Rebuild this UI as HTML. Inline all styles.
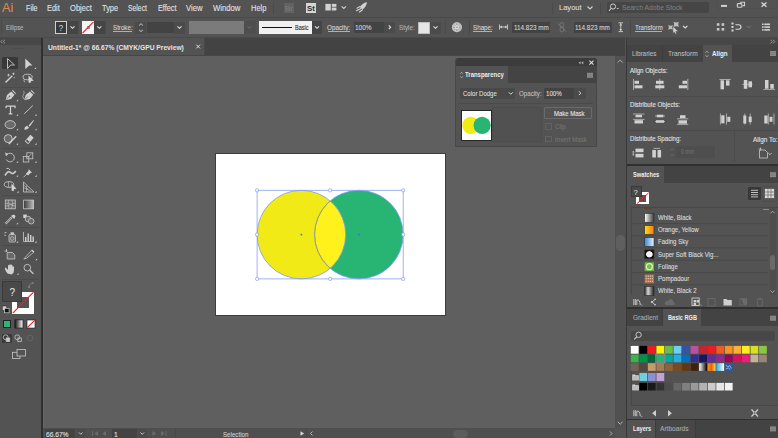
<!DOCTYPE html>
<html><head><meta charset="utf-8">
<style>
*{margin:0;padding:0;box-sizing:border-box}
html,body{width:778px;height:438px;overflow:hidden;background:#535353;font-family:"Liberation Sans",sans-serif;color:#d6d6d6}
.a{position:absolute}
.t{position:absolute;white-space:nowrap;-webkit-text-stroke-width:0.1px}
svg{position:absolute;left:0;top:0;overflow:visible}
</style></head><body>
<div class="a" style="left:0px;top:0px;width:778px;height:438px;background:#535353;"></div>
<div class="a" style="left:0px;top:17px;width:778px;height:1px;background:#4a4a4a;"></div>
<div class="a" style="left:0px;top:37px;width:778px;height:1px;background:#4a4a4a;"></div>
<div class="a" style="left:0px;top:38px;width:41px;height:7px;background:#474747;"></div>
<div class="a" style="left:41px;top:38px;width:2px;height:400px;background:#303030;"></div>
<div class="a" style="left:43px;top:38px;width:582px;height:18px;background:#434343;"></div>
<div class="a" style="left:43px;top:38px;width:161px;height:17px;background:#535353;"></div>
<div class="a" style="left:204px;top:38px;width:1px;height:17px;background:#484848;"></div>
<div class="a" style="left:43px;top:55px;width:572px;height:1px;background:#464646;"></div>
<div class="a" style="left:43px;top:56px;width:572px;height:373px;background:#5f5f5f;"></div>
<div class="a" style="left:43px;top:56px;width:1px;height:373px;background:#666;"></div>
<div class="a" style="left:615px;top:56px;width:10.5px;height:373px;background:#515151;"></div>
<div class="a" style="left:43px;top:428px;width:572px;height:10px;background:#4f4f4f;"></div>
<div class="a" style="left:625.5px;top:38px;width:1.7px;height:400px;background:#383838;"></div>
<div class="a" style="left:627px;top:38px;width:151px;height:7px;background:#474747;"></div>
<div class="a" style="left:627px;top:45px;width:151px;height:17px;background:#434343;"></div>
<div class="a" style="left:627px;top:62px;width:151px;height:102px;background:#535353;"></div>
<div class="a" style="left:627px;top:164px;width:151px;height:2px;background:#303030;"></div>
<div class="a" style="left:627px;top:166px;width:151px;height:17px;background:#434343;"></div>
<div class="a" style="left:627px;top:183px;width:151px;height:124px;background:#535353;"></div>
<div class="a" style="left:627px;top:307px;width:151px;height:2px;background:#303030;"></div>
<div class="a" style="left:627px;top:309px;width:151px;height:17px;background:#434343;"></div>
<div class="a" style="left:627px;top:326px;width:151px;height:93px;background:#535353;"></div>
<div class="a" style="left:627px;top:419px;width:151px;height:1px;background:#303030;"></div>
<div class="a" style="left:627px;top:420px;width:151px;height:18px;background:#434343;"></div>
<div class="t" style="left:2.0px;top:2.00px;font-size:12.6px;line-height:12.6px;color:#d98a4e;transform:scaleX(1.000);transform-origin:0 0;">Ai</div>
<div class="t" style="left:25.5px;top:4.00px;font-size:8.4px;line-height:8.4px;color:#e2e2e2;transform:scaleX(0.857);transform-origin:0 0;">File</div>
<div class="t" style="left:47.3px;top:4.00px;font-size:8.4px;line-height:8.4px;color:#e2e2e2;transform:scaleX(0.884);transform-origin:0 0;">Edit</div>
<div class="t" style="left:69.6px;top:4.00px;font-size:8.4px;line-height:8.4px;color:#e2e2e2;transform:scaleX(0.902);transform-origin:0 0;">Object</div>
<div class="t" style="left:101.8px;top:4.00px;font-size:8.4px;line-height:8.4px;color:#e2e2e2;transform:scaleX(0.890);transform-origin:0 0;">Type</div>
<div class="t" style="left:128.2px;top:4.00px;font-size:8.4px;line-height:8.4px;color:#e2e2e2;transform:scaleX(0.814);transform-origin:0 0;">Select</div>
<div class="t" style="left:157.8px;top:4.00px;font-size:8.4px;line-height:8.4px;color:#e2e2e2;transform:scaleX(0.872);transform-origin:0 0;">Effect</div>
<div class="t" style="left:186.2px;top:4.00px;font-size:8.4px;line-height:8.4px;color:#e2e2e2;transform:scaleX(0.914);transform-origin:0 0;">View</div>
<div class="t" style="left:212.8px;top:4.00px;font-size:8.4px;line-height:8.4px;color:#e2e2e2;transform:scaleX(0.920);transform-origin:0 0;">Window</div>
<div class="t" style="left:250.5px;top:4.00px;font-size:8.4px;line-height:8.4px;color:#e2e2e2;transform:scaleX(0.891);transform-origin:0 0;">Help</div>
<div class="a" style="left:273px;top:3px;width:1px;height:11px;background:#4a4a4a;"></div>
<div class="a" style="left:283.7px;top:2.8px;width:10.3px;height:10.1px;background:#626262;"></div>
<div class="t" style="left:285px;top:5.00px;font-size:7px;line-height:7px;color:#7c7c7c;transform:scaleX(1.143);transform-origin:0 0;">Br</div>
<div class="a" style="left:305.6px;top:2.8px;width:10.3px;height:10.1px;background:#d6d6d6;"></div>
<div class="t" style="left:306.9px;top:5.00px;font-size:7px;line-height:7px;color:#2e2e2e;font-weight:bold;-webkit-text-stroke-width:0;transform:scaleX(1.114);transform-origin:0 0;">St</div>
<svg width="778" height="438"><g fill="#d2d2d2"><rect x="325.4" y="3.9" width="5.4" height="6.6"/><rect x="331.8" y="3.9" width="4.6" height="2.9"/><rect x="331.8" y="7.6" width="4.6" height="2.9"/></g><path d="M341.6 6.3 l2.2 2.2 l2.2 -2.2" stroke="#d0d0d0" stroke-width="1.1" fill="none"/><path d="M367 2 Q366.5 6.5 362.5 9.5 L359.8 7 Q362.5 3 367 2 Z" fill="#d0d0d0"/><path d="M360 6.5 L357 8.2 M361 8.5 L356.5 10.7 M362.5 9.8 L359.5 12" stroke="#d0d0d0" stroke-width="1.2" stroke-linecap="round"/></svg>
<div class="a" style="left:551.5px;top:3px;width:1px;height:11px;background:#4a4a4a;"></div>
<div class="t" style="left:558.8px;top:4.00px;font-size:7.8px;line-height:7.8px;color:#dcdcdc;transform:scaleX(0.965);transform-origin:0 0;">Layout</div>
<svg width="778" height="438"><path d="M587.5 6.5 l2.5 2.5 l2.5 -2.5" stroke="#d0d0d0" stroke-width="1.1" fill="none"/></svg>
<div class="a" style="left:599.5px;top:3px;width:1px;height:11px;background:#4a4a4a;"></div>
<div class="a" style="left:607.3px;top:2px;width:102px;height:11px;background:#464646;border-radius:1.5px"></div>
<svg width="778" height="438"><circle cx="613" cy="6.5" r="2.6" stroke="#cfcfcf" stroke-width="1" fill="none"/><path d="M611 8.5 L609 11" stroke="#cfcfcf" stroke-width="1.2"/><path d="M616.5 8 l1.3 1.3 l1.3 -1.3z" fill="#cfcfcf"/></svg>
<div class="t" style="left:622px;top:4.00px;font-size:7.4px;line-height:7.4px;color:#7d7d7d;transform:scaleX(0.902);transform-origin:0 0;">Search Adobe Stock</div>
<div class="a" style="left:716px;top:-2px;width:62px;height:11px;background:transparent;border:0.8px solid #4f4f4f;border-radius:3px"></div>
<svg width="778" height="438"><path d="M721 5.9 H727" stroke="#d0d0d0" stroke-width="2"/><rect x="737.3" y="3.6" width="4.6" height="3.6" rx="0.8" stroke="#d0d0d0" stroke-width="1.1" fill="none"/><path d="M740 2.2 H744.5 V5.6 H742.5" stroke="#d0d0d0" stroke-width="1.1" fill="none"/><path d="M761.5 2.4 L766.5 6.8 M766.5 2.4 L761.5 6.8" stroke="#d8d8d8" stroke-width="1.3"/></svg>
<div class="a" style="left:1px;top:20px;width:1px;height:14px;background:#4a4a4a;"></div>
<div class="t" style="left:6.4px;top:24.00px;font-size:7px;line-height:7px;color:#b4b4b4;transform:scaleX(0.844);transform-origin:0 0;">Ellipse</div>
<div class="a" style="left:54.5px;top:21px;width:24px;height:13px;background:#4b4b4b;border-radius:1px"></div>
<div class="a" style="left:55px;top:21.4px;width:12.2px;height:12.3px;background:#3a3a3a;border:1.4px solid #cfcfcf"></div>
<div class="t" style="left:58.6px;top:24.00px;font-size:8.4px;line-height:8.4px;color:#d8d8d8;-webkit-text-stroke-width:0">?</div>
<div class="a" style="left:67.2px;top:21.4px;width:10.6px;height:12.3px;background:#454545;"></div>
<div class="a" style="left:81.5px;top:21px;width:24px;height:13px;background:#4b4b4b;border-radius:1px"></div>
<div class="a" style="left:82px;top:21.4px;width:12px;height:12.3px;background:#f5f5f5;"></div>
<div class="a" style="left:86.5px;top:26px;width:3px;height:3px;background:#9a9a9a;"></div>
<div class="a" style="left:94px;top:21.4px;width:11.4px;height:12.3px;background:#454545;"></div>
<svg width="778" height="438"><path d="M82.5 33.2 L93.5 21.9" stroke="#e8202a" stroke-width="1.2"/><path d="M70.5 26.3 l2 2 l2 -2" stroke="#dedede" stroke-width="1.15" fill="none"/><path d="M97.3 26.3 l2 2 l2 -2" stroke="#dedede" stroke-width="1.15" fill="none"/></svg>
<div class="t" style="left:112.5px;top:25.00px;font-size:6.8px;line-height:6.8px;color:#d4d4d4;transform:scaleX(0.910);transform-origin:0 0;">Stroke:</div>
<div class="a" style="left:112.5px;top:31.2px;width:19.5px;height:0.6px;background:#b0b0b0;"></div>
<div class="a" style="left:135.3px;top:21.5px;width:11px;height:12px;background:#4b4b4b;"></div>
<div class="a" style="left:147.3px;top:21.7px;width:27px;height:11px;background:#434343;"></div>
<div class="a" style="left:174.3px;top:21.5px;width:10.5px;height:12px;background:#4b4b4b;"></div>
<svg width="778" height="438"><path d="M139 25.5 l2 -1.8 l2 1.8 M139 29.8 l2 1.8 l2 -1.8" stroke="#cfcfcf" stroke-width="0.9" fill="none"/><path d="M177.5 26.3 l2 2 l2 -2" stroke="#dedede" stroke-width="1.15" fill="none"/></svg>
<div class="a" style="left:188.7px;top:20.8px;width:55.2px;height:12.8px;background:#7b7b7b;"></div>
<div class="a" style="left:243.9px;top:20.8px;width:12px;height:12.8px;background:#4e4e4e;"></div>
<svg width="778" height="438"><path d="M247.5 26.3 l2 2 l2 -2" stroke="#6e6e6e" stroke-width="1" fill="none"/></svg>
<div class="a" style="left:258.6px;top:21.4px;width:53.1px;height:12.2px;background:#f0f0f0;"></div>
<div class="a" style="left:261.9px;top:26.6px;width:30.1px;height:1.8px;background:#111;"></div>
<div class="t" style="left:294.8px;top:25.00px;font-size:6.8px;line-height:6.8px;color:#2a2a2a;transform:scaleX(0.818);transform-origin:0 0;">Basic</div>
<div class="a" style="left:311.7px;top:21.4px;width:10.6px;height:12.2px;background:#454545;"></div>
<svg width="778" height="438"><path d="M315 26.3 l2 2 l2 -2" stroke="#dedede" stroke-width="1.15" fill="none"/></svg>
<div class="t" style="left:327.3px;top:25.00px;font-size:6.8px;line-height:6.8px;color:#d4d4d4;transform:scaleX(0.930);transform-origin:0 0;">Opacity:</div>
<div class="a" style="left:327.5px;top:31.2px;width:22.7px;height:0.6px;background:#b0b0b0;"></div>
<div class="a" style="left:354px;top:22px;width:30px;height:10.7px;background:#434343;"></div>
<div class="t" style="left:355.1px;top:25.00px;font-size:6.8px;line-height:6.8px;color:#d4d4d4;transform:scaleX(0.954);transform-origin:0 0;">100%</div>
<div class="a" style="left:384px;top:21.5px;width:11.2px;height:11.5px;background:#4b4b4b;"></div>
<svg width="778" height="438"><path d="M388.8 25.3 l1.8 1.9 l-1.8 1.9" stroke="#dedede" stroke-width="1.15" fill="none"/></svg>
<div class="t" style="left:398.5px;top:25.00px;font-size:6.8px;line-height:6.8px;color:#b0b0b0;transform:scaleX(0.929);transform-origin:0 0;">Style:</div>
<div class="a" style="left:417.7px;top:21.7px;width:12.6px;height:11.9px;background:#e6e6e6;border:0.6px solid #bdbdbd"></div>
<div class="a" style="left:430.3px;top:21.7px;width:10.5px;height:11.9px;background:#4b4b4b;"></div>
<svg width="778" height="438"><path d="M433.5 26.3 l2 2 l2 -2" stroke="#dedede" stroke-width="1.15" fill="none"/></svg>
<div class="a" style="left:445px;top:20px;width:1px;height:15px;background:#4a4a4a;"></div>
<svg width="778" height="438"><circle cx="456.9" cy="27.2" r="5" fill="#d6d6d6"/><circle cx="456.9" cy="27.2" r="4.1" fill="none" stroke="#9a9a9a" stroke-width="0.5"/><g fill="#8a8a8a"><circle cx="456.9" cy="24.3" r="0.8"/><circle cx="456.9" cy="30.1" r="0.8"/><circle cx="454" cy="27.2" r="0.8"/><circle cx="459.8" cy="27.2" r="0.8"/><circle cx="454.9" cy="25.2" r="0.6"/><circle cx="458.9" cy="25.2" r="0.6"/><circle cx="454.9" cy="29.2" r="0.6"/><circle cx="458.9" cy="29.2" r="0.6"/><circle cx="456.9" cy="27.2" r="0.7"/></g></svg>
<div class="a" style="left:468.5px;top:20px;width:1px;height:15px;background:#4a4a4a;"></div>
<div class="t" style="left:472.8px;top:25.00px;font-size:6.8px;line-height:6.8px;color:#d4d4d4;transform:scaleX(0.919);transform-origin:0 0;">Shape:</div>
<div class="a" style="left:473px;top:31.2px;width:19.3px;height:0.6px;background:#b0b0b0;"></div>
<svg width="778" height="438"><path d="M499.5 24.5 V29.5 M507.5 24.5 V29.5 M500 27 H507" stroke="#cfcfcf" stroke-width="0.9"/><path d="M500 27 l2 -1.5 v3z M507 27 l-2 -1.5 v3z" fill="#cfcfcf"/></svg>
<div class="a" style="left:511.8px;top:21.7px;width:38.1px;height:11.3px;background:#434343;"></div>
<div class="t" style="left:513.6px;top:25.00px;font-size:6.6px;line-height:6.6px;color:#d4d4d4;transform:scaleX(0.961);transform-origin:0 0;">114.823 mm</div>
<svg width="778" height="438"><g stroke="#787878" stroke-width="0.9" fill="none"><rect x="560" y="22.6" width="3.8" height="4.6" rx="1.9"/><rect x="560" y="27.2" width="3.8" height="4.8" rx="1.9"/><path d="M557.6 23.2 L566.4 31.8"/></g></svg>
<div class="a" style="left:573.5px;top:21.7px;width:38.7px;height:11.3px;background:#434343;"></div>
<div class="t" style="left:575.3px;top:25.00px;font-size:6.6px;line-height:6.6px;color:#d4d4d4;transform:scaleX(0.961);transform-origin:0 0;">114.823 mm</div>
<svg width="778" height="438"><path d="M618.5 22.8 H623 M618.5 31.6 H623 M620.75 23 V31.4" stroke="#cfcfcf" stroke-width="0.9"/><path d="M620.75 23.5 l-1.5 2 h3z M620.75 30.9 l-1.5 -2 h3z" fill="#cfcfcf"/></svg>
<div class="a" style="left:630px;top:20px;width:1px;height:15px;background:#4a4a4a;"></div>
<div class="t" style="left:634.8px;top:25.00px;font-size:6.8px;line-height:6.8px;color:#d4d4d4;transform:scaleX(0.905);transform-origin:0 0;">Transform</div>
<div class="a" style="left:635px;top:31.2px;width:27.3px;height:0.6px;background:#b0b0b0;"></div>
<svg width="778" height="438"><path d="M668.3000000000001 25.099999999999998 Q670.6 26.365 672.9 25.099999999999998 Q671.635 27.4 672.9 29.7 Q670.6 28.435 668.3000000000001 29.7 Q669.565 27.4 668.3000000000001 25.099999999999998 Z M673.6 21.799999999999997 Q676.2 23.229999999999997 678.8000000000001 21.799999999999997 Q677.37 24.4 678.8000000000001 27.0 Q676.2 25.57 673.6 27.0 Q675.0300000000001 24.4 673.6 21.799999999999997 Z" fill="#bdbdbd"/><path d="M673 26.5 L678 31.2 L675.6 31.4 L676.6 33.4 L675.4 33.9 L674.4 31.9 L673 33.2 Z" fill="#d6d6d6" stroke="#535353" stroke-width="0.4"/><path d="M683 25.8 l2.2 2.2 l2.2 -2.2" stroke="#dedede" stroke-width="1.15" fill="none"/><g fill="#c8c8c8"><rect x="716.8" y="23.2" width="2.6" height="2.6"/><rect x="721.6" y="23.2" width="2.6" height="2.6"/><rect x="716.8" y="28" width="2.6" height="2.6"/><rect x="721.6" y="28" width="2.6" height="2.6"/></g><g fill="#d6d6d6"><rect x="731.5" y="22.5" width="2" height="2"/><rect x="731.5" y="26" width="2" height="2"/><rect x="731.5" y="29.5" width="2" height="2"/></g><path d="M735.5 24.8 h3 q2.5 0 2.5 2.2 q0 2.2 -2.5 2.2 h-3" stroke="#d6d6d6" stroke-width="1.1" fill="none"/><path d="M746.5 25.8 l2.2 2.2 l2.2 -2.2" stroke="#7a7a7a" stroke-width="0.9" fill="none"/><g fill="#cfcfcf"><rect x="762" y="23.5" width="1.6" height="1.6"/><rect x="762" y="26.3" width="1.6" height="1.6"/><rect x="762" y="29.1" width="1.6" height="1.6"/><rect x="764.3" y="23.5" width="5.7" height="1.6"/><rect x="764.3" y="26.3" width="5.7" height="1.6"/><rect x="764.3" y="29.1" width="5.7" height="1.6"/></g></svg>
<div class="a" style="left:215px;top:153px;width:231px;height:163px;background:#3d3d3d;"></div>
<div class="a" style="left:216px;top:154px;width:229px;height:161px;background:#ffffff;"></div>
<svg width="778" height="438">
<defs><clipPath id="cl1"><circle cx="301.4" cy="234.6" r="44.29999999999998"/></clipPath></defs>
<circle cx="301.4" cy="234.6" r="44.29999999999998" fill="#f2ea17"/>
<circle cx="358.9" cy="234.6" r="44.29999999999998" fill="#28b574"/>
<circle cx="358.9" cy="234.6" r="44.29999999999998" fill="#fff11c" clip-path="url(#cl1)"/>
<circle cx="301.4" cy="234.6" r="44.29999999999998" fill="none" stroke="#7e9bef" stroke-width="0.8"/>
<circle cx="358.9" cy="234.6" r="44.29999999999998" fill="none" stroke="#7e9bef" stroke-width="0.8"/>
<circle cx="358.9" cy="234.6" r="44.29999999999998" fill="none" stroke="#a09a50" stroke-width="0.8" clip-path="url(#cl1)" opacity="0.8"/>
<rect x="257.1" y="190.3" width="146.09999999999997" height="88.59999999999997" fill="none" stroke="#86a0f3" stroke-width="0.8"/>
<rect x="300.59999999999997" y="233.79999999999998" width="1.6" height="1.6" fill="#3c6de0"/>
<rect x="358.09999999999997" y="233.79999999999998" width="1.6" height="1.6" fill="#3c6de0"/>
<rect x="255.60000000000002" y="188.8" width="3" height="3" rx="1" fill="#fff" stroke="#86a0f3" stroke-width="0.8"/><rect x="255.60000000000002" y="233.1" width="3" height="3" rx="1" fill="#fff" stroke="#86a0f3" stroke-width="0.8"/><rect x="255.60000000000002" y="277.4" width="3" height="3" rx="1" fill="#fff" stroke="#86a0f3" stroke-width="0.8"/><rect x="328.65" y="188.8" width="3" height="3" rx="1" fill="#fff" stroke="#86a0f3" stroke-width="0.8"/><rect x="328.65" y="277.4" width="3" height="3" rx="1" fill="#fff" stroke="#86a0f3" stroke-width="0.8"/><rect x="401.7" y="188.8" width="3" height="3" rx="1" fill="#fff" stroke="#86a0f3" stroke-width="0.8"/><rect x="401.7" y="233.1" width="3" height="3" rx="1" fill="#fff" stroke="#86a0f3" stroke-width="0.8"/><rect x="401.7" y="277.4" width="3" height="3" rx="1" fill="#fff" stroke="#86a0f3" stroke-width="0.8"/></svg>
<div class="t" style="left:48.3px;top:45.00px;font-size:6.6px;line-height:6.6px;color:#e4e4e4;font-weight:bold;-webkit-text-stroke-width:0;transform:scaleX(1.014);transform-origin:0 0;">Untitled-1* @ 66.67% (CMYK/GPU Preview)</div>
<svg width="778" height="438"><path d="M196.3 44.7 L200 48.4 M200 44.7 L196.3 48.4" stroke="#dcdcdc" stroke-width="1"/></svg>
<svg width="778" height="438"><path d="M617.8 62.5 l2.4 -2.4 l2.4 2.4" stroke="#bdbdbd" stroke-width="0.9" fill="none"/><path d="M617.8 421.8 l2.4 2.4 l2.4 -2.4" stroke="#bdbdbd" stroke-width="0.9" fill="none"/><path d="M610 431.5 l2 2 l-2 2" stroke="#bdbdbd" stroke-width="0.9" fill="none"/><path d="M312.5 431.5 l-2 2 l2 2" stroke="#bdbdbd" stroke-width="0.9" fill="none"/></svg>
<div class="a" style="left:615.8px;top:235px;width:9.4px;height:15.6px;background:#5f5f5f;border-radius:4.5px"></div>
<div class="a" style="left:45.4px;top:429px;width:30px;height:9px;background:#434343;"></div>
<div class="t" style="left:46.3px;top:432.00px;font-size:6.8px;line-height:6.8px;color:#e0e0e0;transform:scaleX(0.976);transform-origin:0 0;">66.67%</div>
<div class="a" style="left:76.5px;top:429px;width:8.5px;height:9px;background:#4b4b4b;"></div>
<div class="a" style="left:112.3px;top:429px;width:25px;height:9px;background:#434343;"></div>
<div class="t" style="left:114px;top:432.00px;font-size:6.8px;line-height:6.8px;color:#e0e0e0;">1</div>
<div class="a" style="left:137.8px;top:429px;width:9px;height:9px;background:#4b4b4b;"></div>
<svg width="778" height="438"><path d="M79 432.5 l1.8 1.8 l1.8 -1.8 M140.5 432.5 l1.8 1.8 l1.8 -1.8" stroke="#d8d8d8" stroke-width="0.9" fill="none"/><g fill="#6c6c6c"><rect x="92" y="431" width="0.9" height="5"/><path d="M98 431 v5 l-3.5 -2.5z"/><path d="M106 431 v5 l-3.5 -2.5z"/><path d="M152.5 431 v5 l3.5 -2.5z"/><path d="M161 431 v5 l3.5 -2.5z"/><rect x="165.5" y="431" width="0.9" height="5"/></g><path d="M300.5 431.2 v4.6 l3.6 -2.3z" fill="#d8d8d8"/></svg>
<div class="a" style="left:175px;top:429px;width:1px;height:9px;background:#484848;"></div>
<div class="t" style="left:222.5px;top:432.00px;font-size:6.8px;line-height:6.8px;color:#d0d0d0;transform:scaleX(0.908);transform-origin:0 0;">Selection</div>
<div class="a" style="left:306px;top:429px;width:1px;height:9px;background:#484848;"></div>
<div class="a" style="left:453px;top:429.5px;width:15px;height:8px;background:#5c5c5c;border-radius:4px"></div>
<div class="a" style="left:455px;top:58px;width:142px;height:89px;background:#535353;border:1px solid #474747;border-radius:3px 3px 0 0"></div>
<div class="a" style="left:455.5px;top:58.3px;width:141px;height:8px;background:#3c3c3c;border-radius:3px 3px 0 0"></div>
<div class="a" style="left:455.5px;top:66.2px;width:141px;height:17px;background:#444444;"></div>
<div class="a" style="left:455.5px;top:66.2px;width:52.3px;height:17px;background:#535353;"></div>
<svg width="778" height="438"><path d="M583.3 61.2 L581.3 62.8 L583.3 64.4 Z M580.6 61.2 L578.6 62.8 L580.6 64.4 Z" fill="#b0b0b0"/><path d="M589.4 60.6 L593.5 64.7 M593.5 60.6 L589.4 64.7" stroke="#dcdcdc" stroke-width="1.1"/><path d="M460.3 73.8 l1.3 -1.6 l1.3 1.6 M460.3 76.3 l1.3 1.6 l1.3 -1.6" stroke="#bdbdbd" stroke-width="0.7" fill="none"/><rect x="587" y="72.8" width="6" height="5" fill="#8a8a8a"/><path d="M587 74.4 h6 M587 76.1 h6" stroke="#6e6e6e" stroke-width="0.4"/></svg>
<div class="t" style="left:465px;top:72.00px;font-size:6.3px;line-height:6.3px;color:#ececec;font-weight:bold;-webkit-text-stroke-width:0;transform:scaleX(0.947);transform-origin:0 0;">Transparency</div>
<div class="a" style="left:460.3px;top:87.7px;width:55px;height:11.2px;background:#494949;border-radius:1px"></div>
<div class="t" style="left:463.3px;top:91.00px;font-size:6.3px;line-height:6.3px;color:#dedede;transform:scaleX(0.956);transform-origin:0 0;">Color Dodge</div>
<svg width="778" height="438"><path d="M508.8 92.3 l2 2 l2 -2" stroke="#d8d8d8" stroke-width="1" fill="none"/></svg>
<div class="t" style="left:519px;top:91.00px;font-size:6.3px;line-height:6.3px;color:#bdbdbd;transform:scaleX(0.978);transform-origin:0 0;">Opacity:</div>
<div class="a" style="left:544px;top:87.5px;width:30.3px;height:11.5px;background:#434343;border-radius:1px"></div>
<div class="t" style="left:546px;top:91.00px;font-size:6.3px;line-height:6.3px;color:#dedede;transform:scaleX(0.981);transform-origin:0 0;">100%</div>
<div class="a" style="left:574.3px;top:87.5px;width:11.7px;height:11.5px;background:#4b4b4b;border-radius:1px"></div>
<svg width="778" height="438"><path d="M579 91.3 l1.8 1.9 l-1.8 1.9" stroke="#d8d8d8" stroke-width="1" fill="none"/></svg>
<div class="a" style="left:459px;top:103px;width:134px;height:0.8px;background:#4a4a4a;"></div>
<div class="a" style="left:492px;top:107px;width:50px;height:34.5px;background:#515151;border:0.6px solid #4d4d4d"></div>
<div class="a" style="left:460.7px;top:109.6px;width:31.3px;height:31.2px;background:#ffffff;border:1px solid #262626"></div>
<svg width="778" height="438"><circle cx="470.8" cy="125.3" r="8.6" fill="#f2ea17"/><circle cx="482.1" cy="125.3" r="8.6" fill="#28b574"/></svg>
<div class="a" style="left:544px;top:107px;width:48px;height:12.1px;background:#535353;border:0.8px solid #6a6a6a;border-radius:1px"></div>
<div class="t" style="left:553.5px;top:111.00px;font-size:6.3px;line-height:6.3px;color:#e4e4e4;transform:scaleX(0.947);transform-origin:0 0;">Make Mask</div>
<div class="a" style="left:545px;top:123px;width:6.8px;height:7.3px;background:transparent;border:0.8px solid #626262"></div>
<div class="t" style="left:555px;top:124.00px;font-size:6.3px;line-height:6.3px;color:#747474;">Clip</div>
<div class="a" style="left:545px;top:135.5px;width:6.8px;height:6.9px;background:transparent;border:0.8px solid #626262"></div>
<div class="t" style="left:555px;top:137.00px;font-size:6.3px;line-height:6.3px;color:#747474;transform:scaleX(0.977);transform-origin:0 0;">Invert Mask</div>
<svg width="778" height="438"><path d="M5 39.8 L3.2 41.6 L5 43.4 M2.6 39.8 L0.8 41.6 L2.6 43.4" stroke="#a8a8a8" stroke-width="0.8" fill="none"/></svg>
<div class="a" style="left:12.5px;top:48.3px;width:12px;height:1px;background:#4d4d4d;"></div>
<div class="a" style="left:1.8px;top:56.6px;width:16.1px;height:12.9px;background:#393939;border-radius:1.5px"></div>
<div class="a" style="left:2px;top:87.1px;width:37px;height:0.8px;background:#4b4b4b;"></div>
<div class="a" style="left:2px;top:148px;width:37px;height:0.8px;background:#4b4b4b;"></div>
<div class="a" style="left:2px;top:195px;width:37px;height:0.8px;background:#4b4b4b;"></div>
<div class="a" style="left:2px;top:227.1px;width:37px;height:0.8px;background:#4b4b4b;"></div>
<div class="a" style="left:2px;top:245.3px;width:37px;height:0.8px;background:#4b4b4b;"></div>
<div class="a" style="left:2px;top:278.8px;width:37px;height:0.8px;background:#4b4b4b;"></div>
<svg width="778" height="438"><path d="M7.5 58.6 L14.5 65 L10.6 65 L7.5 68.6 Z" fill="none" stroke="#c8c8c8" stroke-width="0.9" stroke-linejoin="round"/><path d="M25.3 58.4 L32.5 65.4 L29.2 65.6 L25.3 69 Z" fill="#d2d2d2"/><path d="M36.1 67.2 L36.1 69.0 L34.3 69.0 Z" fill="#cfcfcf"/><path d="M5.5 82.5 L12.3 75.7" stroke="#cfcfcf" stroke-width="1.4"/><path d="M8.5 73.8 v2.6 M7.2 75.1 h2.6 M13.5 72.6 v2.4 M12.3 73.8 h2.4" stroke="#cfcfcf" stroke-width="0.8"/><circle cx="14.2" cy="77.6" r="0.6" fill="#cfcfcf"/><ellipse cx="27.6" cy="77" rx="4.6" ry="2.8" fill="none" stroke="#c8c8c8" stroke-width="0.9"/><path d="M24.3 79 q-1 2 0.5 3.3" stroke="#c8c8c8" stroke-width="0.8" fill="none"/><path d="M28.5 75.5 L33.8 80.8 L31.3 80.9 L30.3 83 L28.5 82.5 Z" fill="#d2d2d2"/><path d="M5.6 100.2 L7 95 L11.2 91.5 L14.5 94.8 L11 99 Z" fill="#d0d0d0"/><path d="M12 90.7 L15.4 94 L16 93.2 L12.8 90 Z" fill="#d0d0d0"/><path d="M5.8 100 L9.3 96.4" stroke="#5a5a5a" stroke-width="0.6"/><circle cx="9.6" cy="96.2" r="0.7" fill="#5a5a5a"/><path d="M18.1 99.4 L18.1 101.2 L16.3 101.2 Z" fill="#cfcfcf"/><path d="M24.3 100.2 L25.7 95 L29.9 91.5 L33.2 94.8 L29.7 99 Z" fill="#d0d0d0"/><path d="M30.7 90.7 L34.1 94 L34.7 93.2 L31.5 90 Z" fill="#d0d0d0"/><path d="M24.5 100 L28 96.4" stroke="#5a5a5a" stroke-width="0.6"/><path d="M23.5 91 q1.5 1.5 0 3.5 q-1.5 2 0 4 q1 1 1.5 0.5" stroke="#c0c0c0" stroke-width="0.7" fill="none"/><path d="M6 106.2 H15 V108.2 M6 106.2 V108.2 M10.5 106.2 V113.8 M8.7 113.8 H12.3" stroke="#d2d2d2" stroke-width="1.2" fill="none"/><path d="M18.1 113.9 L18.1 115.7 L16.3 115.7 Z" fill="#cfcfcf"/><path d="M24.3 113.8 L32.8 105.5" stroke="#d0d0d0" stroke-width="0.9"/><path d="M36.6 113.9 L36.6 115.7 L34.8 115.7 Z" fill="#cfcfcf"/><ellipse cx="10.2" cy="124.6" rx="5.2" ry="4" fill="#6b6b6b" stroke="#c8c8c8" stroke-width="0.9"/><path d="M18.1 128.4 L18.1 130.2 L16.3 130.2 Z" fill="#cfcfcf"/><path d="M28.5 125.5 L33.5 120 L34 120.6 L29.8 126.5 Z" fill="#d0d0d0"/><path d="M24.2 129.6 Q24.5 126.5 27 125.8 L29 127.5 Q28 130 24.2 129.6 Z" fill="#d0d0d0"/><path d="M36.6 128.4 L36.6 130.2 L34.8 130.2 Z" fill="#cfcfcf"/><circle cx="8.2" cy="138.6" r="4" fill="#6b6b6b" stroke="#c8c8c8" stroke-width="0.9"/><path d="M8.8 144 L16.2 136.2" stroke="#d0d0d0" stroke-width="1.5"/><path d="M18.1 142.9 L18.1 144.7 L16.3 144.7 Z" fill="#cfcfcf"/><path d="M30.40 134.81 L33.73 137.69 L28.10 144.19 L24.77 141.31 Z" fill="#d0d0d0"/><path d="M27.07 139.73 L29.34 141.69 L28.16 143.05 L25.89 141.09 Z" fill="#4a4a4a"/><path d="M36.6 142.9 L36.6 144.7 L34.8 144.7 Z" fill="#cfcfcf"/><path d="M7 154.5 A4.3 4.3 0 1 1 6.2 159.5" stroke="#c8c8c8" stroke-width="0.9" fill="none"/><path d="M5 152.5 L8.3 153.8 L6 156.5 Z" fill="#c8c8c8"/><path d="M18.1 160.9 L18.1 162.7 L16.3 162.7 Z" fill="#cfcfcf"/><rect x="23.3" y="156.5" width="5.5" height="5.5" fill="none" stroke="#c8c8c8" stroke-width="0.8"/><rect x="26.8" y="152.8" width="6" height="6" fill="none" stroke="#c8c8c8" stroke-width="0.8"/><path d="M27.8 157.5 L31.8 153.5" stroke="#c8c8c8" stroke-width="0.7"/><path d="M36.6 160.9 L36.6 162.7 L34.8 162.7 Z" fill="#cfcfcf"/><path d="M5 175.5 Q8 170 10.5 172.5 Q13 175 15.8 171" stroke="#cfcfcf" stroke-width="1.6" fill="none"/><path d="M6.5 168.5 Q9 167.5 10 170.2" stroke="#cfcfcf" stroke-width="0.9" fill="none"/><path d="M18.1 174.9 L18.1 176.7 L16.3 176.7 Z" fill="#cfcfcf"/><path d="M28.5 169 L32 172.5 L30.5 173 L28 175.5 L26 173.5 L28.5 171 Z" fill="#d0d0d0"/><path d="M23.5 177.3 L27 173.8" stroke="#d0d0d0" stroke-width="0.8"/><path d="M36.6 174.9 L36.6 176.7 L34.8 176.7 Z" fill="#cfcfcf"/><ellipse cx="9" cy="184.5" rx="4.8" ry="2.8" fill="none" stroke="#c8c8c8" stroke-width="0.9"/><path d="M8.5 181.8 v5.3" stroke="#c8c8c8" stroke-width="0.6"/><path d="M11.5 183.5 L16.5 188.8 L14.3 189 L13.4 191.3 L11.6 190.6 Z" fill="#d2d2d2"/><path d="M18.6 190.9 L18.6 192.7 L16.8 192.7 Z" fill="#cfcfcf"/><path d="M23.5 182 L23.5 192 L34 192 Z" fill="none" stroke="#c8c8c8" stroke-width="0.8"/><path d="M23.5 184.5 L28.5 190 M23.5 187.5 L31 191.2 M26.5 185.5 V192" stroke="#c8c8c8" stroke-width="0.6"/><path d="M36.6 190.9 L36.6 192.7 L34.8 192.7 Z" fill="#cfcfcf"/><rect x="5.3" y="200" width="10" height="8.8" fill="#6a6a6a" stroke="#c8c8c8" stroke-width="0.8"/><path d="M5.5 203.5 Q9 202 11 204.5 Q13 207 15 205.5 M8.5 200 Q7.5 204 9 208.8 M12 200 Q13.5 203 11.5 208.8 M5.5 206.5 Q9 205 15 203" stroke="#c8c8c8" stroke-width="0.6" fill="none"/><defs><linearGradient id="tg" x1="0" x2="1"><stop offset="0" stop-color="#3a3a3a"/><stop offset="1" stop-color="#bdbdbd"/></linearGradient></defs><rect x="23.6" y="200.1" width="10" height="8.7" fill="url(#tg)" stroke="#c8c8c8" stroke-width="0.8"/><path d="M5.5 223.8 L12 217.3" stroke="#c8c8c8" stroke-width="2.2"/><path d="M5.5 223.8 L12 217.3" stroke="#5a5a5a" stroke-width="0.9"/><path d="M11 215.8 L14 214.6 L15.5 216 L14.3 219 Z" fill="#d0d0d0"/><path d="M18.1 222.4 L18.1 224.2 L16.3 224.2 Z" fill="#cfcfcf"/><rect x="23.3" y="214.5" width="3.5" height="3.5" fill="#d0d0d0"/><circle cx="28" cy="219" r="2.8" fill="#6a6a6a" stroke="#c8c8c8" stroke-width="0.8"/><circle cx="31.2" cy="221.2" r="2.8" fill="#6a6a6a" stroke="#c8c8c8" stroke-width="0.8"/><rect x="9" y="234.5" width="6.5" height="7.5" rx="1" fill="#6a6a6a" stroke="#c8c8c8" stroke-width="0.8"/><circle cx="12.2" cy="238.5" r="1.8" fill="none" stroke="#c8c8c8" stroke-width="0.7"/><rect x="10.5" y="232.3" width="3.5" height="2.2" fill="#c8c8c8"/><path d="M4.5 232.5 h2 M4.5 234 h1 M4.5 235.5 h1.5" stroke="#c8c8c8" stroke-width="0.7"/><path d="M18.1 240.9 L18.1 242.7 L16.3 242.7 Z" fill="#cfcfcf"/><path d="M23.5 232 V241.5 H34" stroke="#c8c8c8" stroke-width="0.8" fill="none"/><g fill="#d0d0d0"><rect x="25" y="237" width="1.4" height="4.5"/><rect x="27.5" y="233.5" width="1.4" height="8"/><rect x="30" y="235" width="1.4" height="6.5"/><rect x="32.5" y="236.5" width="1.4" height="5"/></g><path d="M36.6 240.9 L36.6 242.7 L34.8 242.7 Z" fill="#cfcfcf"/><path d="M6.5 249 V252 M4.5 251 H7.5" stroke="#c8c8c8" stroke-width="0.8"/><path d="M7.2 252.5 H12.5 L14.8 254.8 V259 H7.2 Z" fill="#6a6a6a" stroke="#c8c8c8" stroke-width="0.8"/><path d="M23.8 259 L31.5 250.5 L33.8 252.2 L26.5 258.3 Z" fill="none" stroke="#c8c8c8" stroke-width="0.8"/><path d="M31.2 250.8 L33.8 252.5 L34.3 251.5 L32 249.6Z" fill="#d0d0d0"/><path d="M37.1 258.4 L37.1 260.2 L35.3 260.2 Z" fill="#cfcfcf"/><path d="M7.5 273.5 Q4.5 270 5 267.5 L6.2 268 L8 270 V265.5 Q8.5 264.3 9.3 265.5 V269 V264.8 Q10 263.6 10.8 264.8 V269 V265.2 Q11.6 264 12.4 265.3 V269.5 V266.8 Q13.2 265.8 14 267 V270.5 Q14 273.5 11.5 274.5 Z" fill="#d0d0d0"/><path d="M18.6 272.9 L18.6 274.7 L16.8 274.7 Z" fill="#cfcfcf"/><circle cx="27.3" cy="267.7" r="3.3" fill="none" stroke="#c8c8c8" stroke-width="0.9"/><path d="M29.8 270.2 L33.5 273.9" stroke="#c8c8c8" stroke-width="1.3"/></svg>
<div class="a" style="left:12.3px;top:291.8px;width:21.6px;height:21.8px;background:#ffffff;"></div>
<div class="a" style="left:17.2px;top:296.8px;width:11.7px;height:11.1px;background:#535353;"></div>
<svg width="778" height="438"><path d="M12.8 313.2 L33.5 292.2" stroke="#e8202a" stroke-width="1.1"/></svg>
<div class="a" style="left:2px;top:280.7px;width:20.2px;height:21px;background:#494949;border:0.9px solid #3a3a3a"></div>
<div class="t" style="left:9.5px;top:288.00px;font-size:10px;line-height:10px;color:#dedede;">?</div>
<svg width="778" height="438"><path d="M29 288 Q29 283 33.5 283" stroke="#8a8a8a" stroke-width="0.8" fill="none"/><path d="M28 286.5 L29 288.6 L30.2 286.5 Z M32.2 282 L34 283 L32.2 284Z" fill="#8a8a8a"/><rect x="2.3" y="306" width="4.5" height="4.5" fill="#d0d0d0" stroke="#222" stroke-width="0.5"/><rect x="4.6" y="308.3" width="4.5" height="4.5" fill="#111" stroke="#d0d0d0" stroke-width="0.7"/></svg>
<div class="a" style="left:2.5px;top:319.8px;width:8.5px;height:8.3px;background:#2bb673;border:1px solid #222"></div>
<svg width="778" height="438"><defs><linearGradient id="g2" x1="0" x2="1"><stop offset="0" stop-color="#111"/><stop offset="1" stop-color="#fff"/></linearGradient></defs><rect x="14.8" y="319.8" width="8.2" height="8.3" fill="url(#g2)" stroke="#222" stroke-width="0.8"/><rect x="26.9" y="319.9" width="8.2" height="8.2" fill="#fff" stroke="#222" stroke-width="0.8"/><path d="M27.3 327.7 L34.7 320.3" stroke="#e8202a" stroke-width="1.1"/></svg>
<div class="a" style="left:2px;top:333.5px;width:9.5px;height:9.5px;background:#3a3a3a;border-radius:1px"></div>
<svg width="778" height="438"><g fill="none" stroke="#c8c8c8" stroke-width="0.8"><circle cx="5.7" cy="337.3" r="2.4"/><rect x="6.2" y="338" width="3.5" height="3.5" fill="#c8c8c8"/><circle cx="17.3" cy="337.3" r="2.4"/><rect x="17.8" y="338" width="3.5" height="3.5"/></g><g fill="none" stroke="#6a6a6a" stroke-width="0.8"><circle cx="30" cy="338" r="2.8"/></g><g fill="#535353" stroke="#c8c8c8" stroke-width="0.8"><rect x="12.5" y="352.3" width="7.5" height="6.3"/><rect x="17" y="349.5" width="8.5" height="6.5"/></g></svg>
<svg width="778" height="438"><path d="M770.5 39.8 L772.3 41.6 L770.5 43.4 M773 39.8 L774.8 41.6 L773 43.4" stroke="#a8a8a8" stroke-width="0.8" fill="none"/></svg>
<div class="a" style="left:662px;top:45.4px;width:0.8px;height:16.5px;background:#3c3c3c;"></div>
<div class="a" style="left:702.5px;top:45.4px;width:29.7px;height:16.6px;background:#535353;"></div>
<div class="t" style="left:632.4px;top:51.00px;font-size:6.6px;line-height:6.6px;color:#b8b8b8;transform:scaleX(0.964);transform-origin:0 0;">Libraries</div>
<div class="t" style="left:668.1px;top:51.00px;font-size:6.6px;line-height:6.6px;color:#b8b8b8;transform:scaleX(0.996);transform-origin:0 0;">Transform</div>
<div class="t" style="left:711.6px;top:51.00px;font-size:6.6px;line-height:6.6px;color:#f0f0f0;font-weight:bold;-webkit-text-stroke-width:0;transform:scaleX(0.940);transform-origin:0 0;">Align</div>
<svg width="778" height="438"><path d="M705.5 52.8 l1.4 -1.7 l1.4 1.7 M705.5 55.2 l1.4 1.7 l1.4 -1.7" stroke="#bdbdbd" stroke-width="0.7" fill="none"/></svg>
<svg width="778" height="438"><rect x="770" y="51" width="6" height="5" fill="#8a8a8a"/><path d="M770 52.6 h6 M770 54.3 h6" stroke="#6e6e6e" stroke-width="0.4"/></svg>
<div class="t" style="left:630px;top:68.00px;font-size:6.3px;line-height:6.3px;color:#e2e2e2;transform:scaleX(0.962);transform-origin:0 0;">Align Objects:</div>
<div class="t" style="left:630px;top:102.00px;font-size:6.3px;line-height:6.3px;color:#e2e2e2;transform:scaleX(0.971);transform-origin:0 0;">Distribute Objects:</div>
<div class="t" style="left:630px;top:136.00px;font-size:6.3px;line-height:6.3px;color:#e2e2e2;transform:scaleX(0.964);transform-origin:0 0;">Distribute Spacing:</div>
<div class="t" style="left:752.8px;top:137.00px;font-size:6.3px;line-height:6.3px;color:#e2e2e2;transform:scaleX(1.019);transform-origin:0 0;">Align To:</div>
<div class="a" style="left:628px;top:96.2px;width:150px;height:0.8px;background:#4b4b4b;"></div>
<div class="a" style="left:628px;top:130px;width:150px;height:0.8px;background:#4b4b4b;"></div>
<div class="a" style="left:734px;top:131px;width:0.8px;height:31px;background:#4b4b4b;"></div>
<svg width="778" height="438"><path d="M633.5 78.9 L633.5 90" stroke="#c0c0c0" stroke-width="0.8"/><rect x="634.5" y="80.8" width="4.5" height="3" fill="#d0d0d0"/><rect x="634.5" y="85.3" width="8" height="3" fill="#d0d0d0"/><path d="M659.8 78.9 L659.8 90" stroke="#c0c0c0" stroke-width="0.8"/><rect x="656" y="80.8" width="7.6" height="3" fill="#d0d0d0"/><rect x="655.3" y="85.3" width="9" height="3" fill="#d0d0d0"/><path d="M687.8 78.9 L687.8 90" stroke="#c0c0c0" stroke-width="0.8"/><rect x="682.5" y="80.8" width="4.5" height="3" fill="#d0d0d0"/><rect x="678.8" y="85.3" width="8.2" height="3" fill="#d0d0d0"/><path d="M719.4 79.5 L730.7 79.5" stroke="#c0c0c0" stroke-width="0.8"/><rect x="720.5" y="80.3" width="3.5" height="9" fill="#d0d0d0"/><rect x="726" y="80.3" width="3.5" height="5.3" fill="#d0d0d0"/><path d="M742.3 84.3 L752.5 84.3" stroke="#c0c0c0" stroke-width="0.8"/><rect x="743.8" y="80" width="3.5" height="8.8" fill="#d0d0d0"/><rect x="748.5" y="81.3" width="3.5" height="6" fill="#d0d0d0"/><path d="M763.5 89.4 L775 89.4" stroke="#c0c0c0" stroke-width="0.8"/><rect x="765" y="80" width="3.5" height="8.7" fill="#d0d0d0"/><rect x="770.3" y="84" width="3.5" height="4.7" fill="#d0d0d0"/><path d="M633 114 L644.5 114" stroke="#c0c0c0" stroke-width="0.8"/><path d="M633 119.4 L644.5 119.4" stroke="#c0c0c0" stroke-width="0.8"/><rect x="635.5" y="114.8" width="6.5" height="2.5" fill="#d0d0d0"/><rect x="634.5" y="120.2" width="8.5" height="3.3" fill="#d0d0d0"/><path d="M655 116 L665 116" stroke="#c0c0c0" stroke-width="0.8"/><path d="M655 121.5 L665 121.5" stroke="#c0c0c0" stroke-width="0.8"/><rect x="656.8" y="114.7" width="6.5" height="2.6" fill="#d0d0d0"/><rect x="656" y="120.2" width="8" height="2.6" fill="#d0d0d0"/><path d="M677 118.8 L688.3 118.8" stroke="#c0c0c0" stroke-width="0.8"/><path d="M677 124.4 L688.3 124.4" stroke="#c0c0c0" stroke-width="0.8"/><rect x="680" y="115.2" width="5.5" height="3" fill="#d0d0d0"/><rect x="678.5" y="120.3" width="8.5" height="3.4" fill="#d0d0d0"/><path d="M720.4 113.5 L720.4 124.5" stroke="#c0c0c0" stroke-width="0.8"/><path d="M726.5 113.5 L726.5 124.5" stroke="#c0c0c0" stroke-width="0.8"/><rect x="721.2" y="115.3" width="3.3" height="8" fill="#d0d0d0"/><rect x="727.3" y="116.8" width="3" height="5" fill="#d0d0d0"/><path d="M744.8 113.5 L744.8 124.5" stroke="#c0c0c0" stroke-width="0.8"/><path d="M750.2 113.5 L750.2 124.5" stroke="#c0c0c0" stroke-width="0.8"/><rect x="743.3" y="115.5" width="3" height="8" fill="#d0d0d0"/><rect x="748.7" y="116.6" width="3" height="5.5" fill="#d0d0d0"/><path d="M768.3 113.5 L768.3 124.5" stroke="#c0c0c0" stroke-width="0.8"/><path d="M774 113.5 L774 124.5" stroke="#c0c0c0" stroke-width="0.8"/><rect x="764.3" y="115.5" width="3.3" height="8" fill="#d0d0d0"/><rect x="769.5" y="116.8" width="3" height="5" fill="#d0d0d0"/><rect x="635.5" y="148.6" width="8" height="3.6" fill="#d0d0d0"/><rect x="635.5" y="153.8" width="8" height="3.6" fill="#d0d0d0"/><path d="M633.3 151 L633.3 155.5" stroke="#c0c0c0" stroke-width="0.8"/><path d="M632.3 152.5 l1 -1.3 l1 1.3 M632.3 154 l1 1.3 l1 -1.3" stroke="#c0c0c0" stroke-width="0.6" fill="none"/><rect x="652.3" y="150" width="3.6" height="7.5" fill="#d0d0d0"/><rect x="657.5" y="150" width="3.6" height="7.5" fill="#d0d0d0"/><path d="M653.5 148.4 L660 148.4" stroke="#c0c0c0" stroke-width="0.8"/><path d="M759.5 150 H765 L767.5 152.5 V158 H759.5 Z" fill="none" stroke="#c8c8c8" stroke-width="0.8"/><path d="M760.5 147.5 v3 M758.5 149 h3" stroke="#c8c8c8" stroke-width="0.7"/><path d="M768.3 153 l1.7 1.7 l1.7 -1.7" stroke="#c8c8c8" stroke-width="0.9" fill="none"/></svg>
<div class="a" style="left:668.3px;top:146.2px;width:46.7px;height:12.2px;background:#4e4e4e;"></div>
<div class="a" style="left:668.3px;top:146.2px;width:8px;height:12.2px;background:#525252;"></div>
<svg width="778" height="438"><path d="M670.5 150.3 l1.6 -1.6 l1.6 1.6 M670.5 154.3 l1.6 1.6 l1.6 -1.6" stroke="#6e6e6e" stroke-width="0.8" fill="none"/></svg>
<div class="t" style="left:681px;top:149.00px;font-size:6.3px;line-height:6.3px;color:#6e6e6e;transform:scaleX(0.825);transform-origin:0 0;">0 mm</div>
<div class="a" style="left:627px;top:166px;width:37px;height:16.6px;background:#535353;"></div>
<div class="t" style="left:632.5px;top:172.00px;font-size:6.4px;line-height:6.4px;color:#eeeeee;font-weight:bold;-webkit-text-stroke-width:0;transform:scaleX(0.891);transform-origin:0 0;">Swatches</div>
<svg width="778" height="438"><rect x="770" y="172.2" width="6" height="5" fill="#8a8a8a"/><path d="M770 173.79999999999998 h6 M770 175.5 h6" stroke="#6e6e6e" stroke-width="0.4"/></svg>
<div class="a" style="left:636.4px;top:192.4px;width:12.6px;height:11.8px;background:#ffffff;"></div>
<div class="a" style="left:639px;top:195px;width:7.2px;height:6.6px;background:#535353;"></div>
<svg width="778" height="438"><path d="M636.8 203.8 L648.7 192.8" stroke="#e8202a" stroke-width="1"/></svg>
<div class="a" style="left:630.5px;top:186.2px;width:11.8px;height:11.2px;background:#494949;border:0.8px solid #3a3a3a"></div>
<div class="t" style="left:633.8px;top:189.00px;font-size:7px;line-height:7px;color:#dedede;">?</div>
<div class="a" style="left:748px;top:187px;width:13px;height:13.3px;background:#383838;border-radius:1px"></div>
<svg width="778" height="438"><path d="M751 190.3 h7 M751 192.5 h7 M751 194.7 h7 M751 196.9 h7" stroke="#d0d0d0" stroke-width="0.9"/><rect x="762.5" y="186.5" width="14" height="14.5" rx="1" fill="none" stroke="#4d4d4d" stroke-width="0.8"/><rect x="764.9" y="188.9" width="9.2" height="9.2" fill="#dcdcdc"/><path d="M768 188.9 v9.2 M771 188.9 v9.2 M764.9 192 h9.2 M764.9 195 h9.2" stroke="#666" stroke-width="0.7"/></svg>
<div class="a" style="left:630.5px;top:207.2px;width:147.5px;height:88px;background:#535353;"></div>
<div class="a" style="left:630.5px;top:207.2px;width:147.5px;height:0.8px;background:#474747;"></div>
<div class="a" style="left:630.5px;top:207.2px;width:0.8px;height:88px;background:#474747;"></div>
<div class="a" style="left:644px;top:208.2px;width:8px;height:1px;background:#5b4232;"></div>
<div class="a" style="left:763px;top:209px;width:6px;height:0.9px;background:#8a8a8a;"></div>
<svg width="778" height="438"><defs><linearGradient id="lg1" x1="0" x2="1"><stop offset="0" stop-color="#fff"/><stop offset="1" stop-color="#3a3a3a"/></linearGradient><linearGradient id="lg2" x1="0" x2="1"><stop offset="0" stop-color="#ffe000"/><stop offset="1" stop-color="#f6742a"/></linearGradient><linearGradient id="lg3" x1="0" x2="1"><stop offset="0" stop-color="#3d8ad6"/><stop offset="1" stop-color="#e8f2fa"/></linearGradient><linearGradient id="lg4" x1="0" x2="1"><stop offset="0" stop-color="#2a2a2a"/><stop offset="0.35" stop-color="#d8d8d8"/><stop offset="1" stop-color="#1e1e1e"/></linearGradient><radialGradient id="rad"><stop offset="0.62" stop-color="#f4f4f4"/><stop offset="0.8" stop-color="#111"/></radialGradient></defs><rect x="631" y="223.3" width="137" height="0.8" fill="#474747"/><rect x="644.7" y="213.4" width="9.3" height="8.8" fill="url(#lg1)" stroke="#2e2e2e" stroke-width="0.6"/><rect x="631" y="235.5" width="137" height="0.8" fill="#474747"/><rect x="644.7" y="225.6" width="9.3" height="8.8" fill="url(#lg2)" stroke="#2e2e2e" stroke-width="0.6"/><rect x="631" y="247.5" width="137" height="0.8" fill="#474747"/><rect x="644.7" y="237.6" width="9.3" height="8.8" fill="url(#lg3)" stroke="#2e2e2e" stroke-width="0.6"/><rect x="631" y="259.8" width="137" height="0.8" fill="#474747"/><rect x="644.7" y="249.9" width="9.3" height="8.8" fill="url(#rad)" stroke="#2e2e2e" stroke-width="0.6"/><rect x="631" y="272.2" width="137" height="0.8" fill="#474747"/><rect x="644.7" y="262.3" width="9.3" height="8.8" fill="#5fb946"/><circle cx="649.35" cy="266.7" r="3" fill="none" stroke="#e4eeb0" stroke-width="1.3"/><circle cx="649.35" cy="266.7" r="1.6" fill="#7cc142"/><rect x="631" y="284.4" width="137" height="0.8" fill="#474747"/><rect x="644.7" y="274.5" width="9.3" height="8.8" fill="#b07050"/><path d="M645.5 276.09999999999997 h7.5 M645.5 278.7 h7.5 M645.5 281.29999999999995 h7.5" stroke="#f0dcc8" stroke-width="0.9" stroke-dasharray="1.3 0.9"/><rect x="644.7" y="286.6" width="9.3" height="8.8" fill="url(#lg4)" stroke="#2e2e2e" stroke-width="0.6"/></svg>
<div class="t" style="left:657.8px;top:215.00px;font-size:6.4px;line-height:6.4px;color:#dcdcdc;transform:scaleX(0.945);transform-origin:0 0;">White, Black</div>
<div class="t" style="left:657.8px;top:227.00px;font-size:6.4px;line-height:6.4px;color:#dcdcdc;transform:scaleX(0.945);transform-origin:0 0;">Orange, Yellow</div>
<div class="t" style="left:657.8px;top:239.00px;font-size:6.4px;line-height:6.4px;color:#dcdcdc;transform:scaleX(0.945);transform-origin:0 0;">Fading Sky</div>
<div class="t" style="left:657.8px;top:252.00px;font-size:6.4px;line-height:6.4px;color:#dcdcdc;transform:scaleX(0.945);transform-origin:0 0;">Super Soft Black Vig...</div>
<div class="t" style="left:657.8px;top:264.00px;font-size:6.4px;line-height:6.4px;color:#dcdcdc;transform:scaleX(0.945);transform-origin:0 0;">Foliage</div>
<div class="t" style="left:657.8px;top:276.00px;font-size:6.4px;line-height:6.4px;color:#dcdcdc;transform:scaleX(0.945);transform-origin:0 0;">Pompadour</div>
<div class="t" style="left:657.8px;top:288.00px;font-size:6.4px;line-height:6.4px;color:#dcdcdc;transform:scaleX(0.945);transform-origin:0 0;">White, Black 2</div>
<div class="a" style="left:769.5px;top:208px;width:6px;height:87px;background:#4d4d4d;"></div>
<div class="a" style="left:770.2px;top:255px;width:4.6px;height:14.7px;background:#6a6a6a;border-radius:2.3px"></div>
<svg width="778" height="438"><path d="M770.4 213.3 l2.1 -2.1 l2.1 2.1 M770.4 290.5 l2.1 2.1 l2.1 -2.1" stroke="#bdbdbd" stroke-width="0.8" fill="none"/></svg>
<svg width="778" height="438"><path d="M633.8 305 V299 M635.3 305 V299 M636.8 305 V300 Q639.8 299 640.3 305" stroke="#cfcfcf" stroke-width="0.9" fill="none"/><circle cx="641.8" cy="305" r="0.5" fill="#cfcfcf"/><path d="M655 299.3 L652 302 L655 304.7" stroke="#cfcfcf" stroke-width="0.9" fill="none"/><circle cx="651.8" cy="302" r="1" fill="#cfcfcf"/><circle cx="655.2" cy="299.2" r="0.8" fill="#cfcfcf"/><circle cx="655.2" cy="304.8" r="0.8" fill="#cfcfcf"/><path d="M666 305 Q664.5 305 665 302.8 Q665.7 300.5 668 301 Q669 298.5 671.5 299.2 Q673.8 300 673.5 302.2 Q675.5 302.6 675 305 Z" fill="#6a6a6a"/><rect x="692" y="298" width="7.2" height="7.5" fill="none" stroke="#cfcfcf" stroke-width="0.9"/><rect x="693.6" y="300" width="2.5" height="2.5" fill="#cfcfcf"/><rect x="696.6" y="300" width="2.5" height="2.5" fill="#cfcfcf"/><rect x="693.6" y="303" width="2.5" height="2" fill="#cfcfcf"/><circle cx="701" cy="305" r="0.5" fill="#cfcfcf"/><rect x="708" y="298.5" width="7" height="7.5" fill="none" stroke="#6a6a6a" stroke-width="0.9"/><path d="M723.5 299 h3 l1 1 h4.3 v5.5 h-8.3 z" fill="#cfcfcf"/><path d="M741 299 h6 v6 h-3 z" fill="#6a6a6a"/><rect x="740" y="298.5" width="6.5" height="6.5" fill="none" stroke="#6a6a6a" stroke-width="0.8"/><path d="M756.5 299.5 h6.5 M758 299.5 v-1 h3.5 v1 M757.3 300.5 l0.5 5.5 h4.3 l0.5 -5.5" stroke="#6a6a6a" stroke-width="0.8" fill="none"/></svg>
<div class="a" style="left:662.4px;top:309px;width:38.9px;height:16.6px;background:#535353;"></div>
<div class="a" style="left:662px;top:309px;width:0.8px;height:16.6px;background:#3c3c3c;"></div>
<div class="t" style="left:632.5px;top:315.00px;font-size:6.5px;line-height:6.5px;color:#a9a9a9;transform:scaleX(1.003);transform-origin:0 0;">Gradient</div>
<div class="t" style="left:667.9px;top:315.00px;font-size:6.5px;line-height:6.5px;color:#eeeeee;font-weight:bold;-webkit-text-stroke-width:0;transform:scaleX(0.863);transform-origin:0 0;">Basic RGB</div>
<svg width="778" height="438"><rect x="770" y="315.7" width="6" height="5" fill="#8a8a8a"/><path d="M770 317.3 h6 M770 319.0 h6" stroke="#6e6e6e" stroke-width="0.4"/></svg>
<div class="a" style="left:630.9px;top:330.5px;width:144.6px;height:10.8px;background:#474747;border-radius:1px"></div>
<svg width="778" height="438"><circle cx="638.6" cy="334.8" r="2.7" fill="none" stroke="#cfcfcf" stroke-width="0.9"/><path d="M636.7 336.8 L634.2 339.4" stroke="#cfcfcf" stroke-width="1.1"/></svg>
<div class="a" style="left:630.5px;top:343.5px;width:147.5px;height:62.2px;background:#525252;"></div>
<div class="a" style="left:630.5px;top:343.5px;width:0.8px;height:62.2px;background:#474747;"></div>
<div class="a" style="left:630.5px;top:405.2px;width:147.5px;height:0.8px;background:#474747;"></div>
<svg width="778" height="438"><defs><linearGradient id="s1" x1="0" x2="1"><stop offset="0" stop-color="#fff"/><stop offset="1" stop-color="#000"/></linearGradient><linearGradient id="s2" x1="0" x2="1"><stop offset="0" stop-color="#f7931e"/><stop offset="0.5" stop-color="#f15a24"/><stop offset="1" stop-color="#fcee21"/></linearGradient><linearGradient id="s3" x1="0" x2="1"><stop offset="0" stop-color="#29abe2"/><stop offset="1" stop-color="#ffffff"/></linearGradient></defs><rect x="630.80" y="345.9" width="7.8" height="7.8" fill="#ffffff"/><rect x="639.35" y="345.9" width="7.8" height="7.8" fill="#000000"/><rect x="647.90" y="345.9" width="7.8" height="7.8" fill="#ed1c24"/><rect x="656.45" y="345.9" width="7.8" height="7.8" fill="#fff200"/><rect x="665.00" y="345.9" width="7.8" height="7.8" fill="#6abd45"/><rect x="673.55" y="345.9" width="7.8" height="7.8" fill="#6dcff6"/><rect x="682.10" y="345.9" width="7.8" height="7.8" fill="#3953a4"/><rect x="690.65" y="345.9" width="7.8" height="7.8" fill="#bc4fa0"/><rect x="699.20" y="345.9" width="7.8" height="7.8" fill="#c1272d"/><rect x="707.75" y="345.9" width="7.8" height="7.8" fill="#ed1c24"/><rect x="716.30" y="345.9" width="7.8" height="7.8" fill="#f15a24"/><rect x="724.85" y="345.9" width="7.8" height="7.8" fill="#f7931e"/><rect x="733.40" y="345.9" width="7.8" height="7.8" fill="#fbb03b"/><rect x="741.95" y="345.9" width="7.8" height="7.8" fill="#fcee21"/><rect x="750.50" y="345.9" width="7.8" height="7.8" fill="#d9e021"/><rect x="759.05" y="345.9" width="7.8" height="7.8" fill="#8cc63f"/><rect x="630.80" y="354.6" width="7.8" height="7.7" fill="#39b54a"/><rect x="639.35" y="354.6" width="7.8" height="7.7" fill="#009245"/><rect x="647.90" y="354.6" width="7.8" height="7.7" fill="#006837"/><rect x="656.45" y="354.6" width="7.8" height="7.7" fill="#22b573"/><rect x="665.00" y="354.6" width="7.8" height="7.7" fill="#00a99d"/><rect x="673.55" y="354.6" width="7.8" height="7.7" fill="#29abe2"/><rect x="682.10" y="354.6" width="7.8" height="7.7" fill="#0071bc"/><rect x="690.65" y="354.6" width="7.8" height="7.7" fill="#2e3192"/><rect x="699.20" y="354.6" width="7.8" height="7.7" fill="#1b1464"/><rect x="707.75" y="354.6" width="7.8" height="7.7" fill="#662d91"/><rect x="716.30" y="354.6" width="7.8" height="7.7" fill="#93278f"/><rect x="724.85" y="354.6" width="7.8" height="7.7" fill="#9e005d"/><rect x="733.40" y="354.6" width="7.8" height="7.7" fill="#d4145a"/><rect x="741.95" y="354.6" width="7.8" height="7.7" fill="#ed1e79"/><rect x="750.50" y="354.6" width="7.8" height="7.7" fill="#c7b299"/><rect x="759.05" y="354.6" width="7.8" height="7.7" fill="#998675"/><rect x="630.80" y="363.2" width="7.8" height="7.7" fill="#736357"/><rect x="639.35" y="363.2" width="7.8" height="7.7" fill="#534741"/><rect x="647.90" y="363.2" width="7.8" height="7.7" fill="#c69c6d"/><rect x="656.45" y="363.2" width="7.8" height="7.7" fill="#a67c52"/><rect x="665.00" y="363.2" width="7.8" height="7.7" fill="#8c6239"/><rect x="673.55" y="363.2" width="7.8" height="7.7" fill="#754c24"/><rect x="682.10" y="363.2" width="7.8" height="7.7" fill="#603813"/><rect x="690.65" y="363.2" width="7.8" height="7.7" fill="#42210b"/><rect x="699.20" y="363.2" width="7.8" height="7.7" fill="url(#s1)"/><rect x="707.75" y="363.2" width="7.8" height="7.7" fill="url(#s2)"/><rect x="716.30" y="363.2" width="7.8" height="7.7" fill="url(#s3)"/><rect x="724.85" y="363.2" width="7.8" height="7.7" fill="#2c5aa0"/><path d="M725.8499999999999 365 l2 2 l2 -1.5 l1.5 3 M725.8499999999999 369 l2.5 -1 l2 1.5" stroke="#a8c4ea" stroke-width="0.8" fill="none"/><rect x="655.85" y="354" width="9.0" height="8.9" fill="none" stroke="#a0a0a0" stroke-width="0.8"/><path d="M632.3 374.5 h2.5 l0.8 0.8 h3.2 v5 h-6.5 z" fill="#d6d6d6"/><rect x="632.3" y="376" width="6.5" height="4.3" fill="#bdbdbd"/><rect x="639.35" y="373" width="7.8" height="8" fill="#6dcfe0"/><rect x="647.90" y="373" width="7.8" height="8" fill="#8890d0"/><rect x="656.45" y="373" width="7.8" height="8" fill="#c3a0d8"/><path d="M632.3 384.4 h2.5 l0.8 0.8 h3.2 v5 h-6.5 z" fill="#d6d6d6"/><rect x="632.3" y="385.9" width="6.5" height="4.3" fill="#bdbdbd"/><rect x="639.35" y="382.9" width="7.8" height="7.6" fill="#000000"/><rect x="647.90" y="382.9" width="7.8" height="7.6" fill="#1a1a1a"/><rect x="656.45" y="382.9" width="7.8" height="7.6" fill="#333333"/><rect x="665.00" y="382.9" width="7.8" height="7.6" fill="#4d4d4d"/><rect x="673.55" y="382.9" width="7.8" height="7.6" fill="#666666"/><rect x="682.10" y="382.9" width="7.8" height="7.6" fill="#808080"/><rect x="690.65" y="382.9" width="7.8" height="7.6" fill="#999999"/><rect x="699.20" y="382.9" width="7.8" height="7.6" fill="#b3b3b3"/><rect x="707.75" y="382.9" width="7.8" height="7.6" fill="#cccccc"/><rect x="716.30" y="382.9" width="7.8" height="7.6" fill="#e6e6e6"/><rect x="724.85" y="382.9" width="7.8" height="7.6" fill="#f2f2f2"/><path d="M774.5 348 l1.3 1.3 M774.5 402 l1.3 -1.3" stroke="#5e5e5e" stroke-width="0.6"/></svg>
<svg width="778" height="438"><path d="M633.8 416.2 V410.2 M635.3 416.2 V410.2 M636.8 416.2 V411.2 Q639.8 410.2 640.3 416.2" stroke="#cfcfcf" stroke-width="0.9" fill="none"/><circle cx="641.8" cy="416.2" r="0.5" fill="#cfcfcf"/><path d="M656 410 v6.4 l-3.8 -3.2z" fill="#cfcfcf"/><path d="M668 410 v6.4 l3.8 -3.2z" fill="#cfcfcf"/><path d="M751.5 409.5 L758 416.5 M758 409.5 L751.5 416.5" stroke="#cfcfcf" stroke-width="1.2"/><circle cx="754.8" cy="413" r="1.2" fill="#535353" stroke="#cfcfcf" stroke-width="0.7"/></svg>
<div class="a" style="left:627px;top:420px;width:28px;height:18px;background:#535353;"></div>
<div class="a" style="left:655px;top:420px;width:0.8px;height:18px;background:#3c3c3c;"></div>
<div class="a" style="left:655.8px;top:420px;width:39px;height:18px;background:#474747;"></div>
<div class="a" style="left:694.8px;top:420px;width:0.8px;height:18px;background:#3c3c3c;"></div>
<div class="t" style="left:632.5px;top:426.00px;font-size:6.6px;line-height:6.6px;color:#eeeeee;font-weight:bold;-webkit-text-stroke-width:0;transform:scaleX(0.855);transform-origin:0 0;">Layers</div>
<div class="t" style="left:660.4px;top:426.00px;font-size:6.6px;line-height:6.6px;color:#a9a9a9;transform:scaleX(0.999);transform-origin:0 0;">Artboards</div>
<svg width="778" height="438"><rect x="770" y="426.4" width="6" height="5" fill="#8a8a8a"/><path d="M770 428.0 h6 M770 429.7 h6" stroke="#6e6e6e" stroke-width="0.4"/></svg>
</body></html>
